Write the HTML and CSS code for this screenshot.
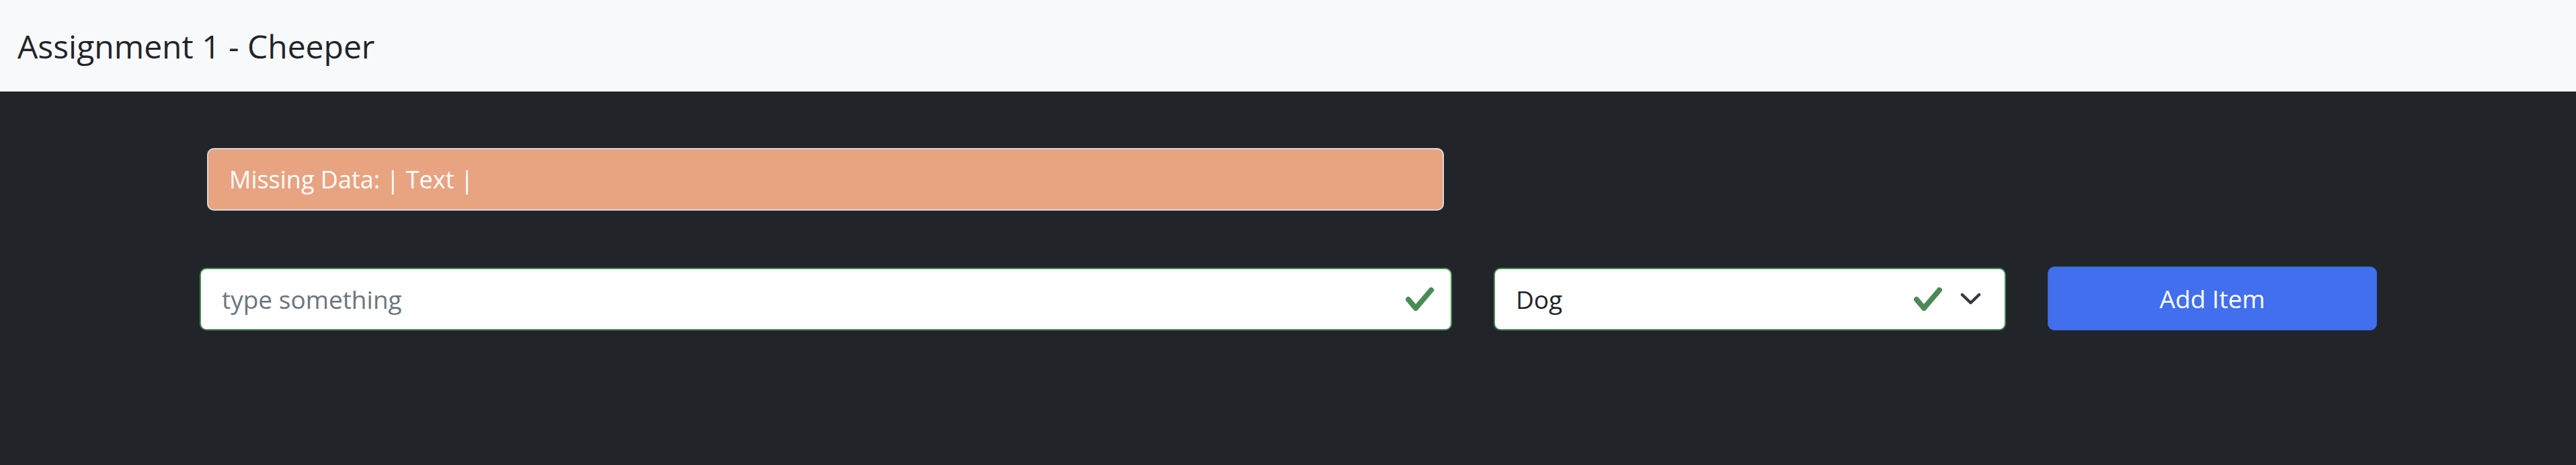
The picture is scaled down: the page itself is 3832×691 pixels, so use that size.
FILE: index.html
```html
<!DOCTYPE html>
<html lang="en">
<head>
<meta charset="utf-8">
<title>Assignment 1 - Cheeper</title>
<link rel="stylesheet" href="styles.css">
</head>
<body>
<nav class="navbar">
  <span class="brand">Assignment 1 - Cheeper</span>
</nav>
<main class="main">
  <div class="alert">Missing Data: | Text |</div>
  <form class="form-row">
    <div class="field field-text">
      <input class="field-input" type="text" placeholder="type something">
      <svg class="check" width="42" height="35" viewBox="0 0 42 35"><polyline points="4,18 15,31 38,4" fill="none" stroke="#4b8a56" stroke-width="8" stroke-linecap="round" stroke-linejoin="round"/></svg>
    </div>
    <div class="field field-select">
      <select class="field-input field-sel">
        <option>Dog</option>
        <option>Cat</option>
      </select>
      <svg class="check" width="42" height="35" viewBox="0 0 42 35"><polyline points="4,18 15,31 38,4" fill="none" stroke="#4b8a56" stroke-width="8" stroke-linecap="round" stroke-linejoin="round"/></svg>
      <svg class="chevron" width="31" height="19" viewBox="0 0 31 19"><polyline points="3,3 15.5,15 28,3" fill="none" stroke="#343a40" stroke-width="4.5" stroke-linecap="round" stroke-linejoin="round"/></svg>
    </div>
    <button class="btn" type="button">Add Item</button>
  </form>
</main>
</body>
</html>
```
FILE: styles.css
```css
html, body {
  margin: 0;
  padding: 0;
}
body {
  background: #212529;
  font-family: "Open Sans", "Noto Sans", sans-serif;
  color: #212529;
  height: 691px;
  overflow: hidden;
}
.navbar {
  height: 136px;
  background: #f8f9fa;
  display: flex;
  align-items: center;
  padding-left: 26px;
}
.brand {
  font-size: 48px;
  color: #212529;
}
.main {
  padding-top: 84px;
}
.alert {
  margin-left: 308px;
  width: 1840px;
  height: 93px;
  box-sizing: border-box;
  border: 2px solid #d6d8db;
  border-radius: 10px;
  background: #e8a381;
  color: #ffffff;
  font-size: 36px;
  display: flex;
  align-items: center;
  padding-left: 31px;
}
.form-row {
  margin: 85px 0 0 297px;
  display: flex;
  gap: 62px;
  height: 93px;
}
.field {
  box-sizing: border-box;
  height: 93px;
  background: #ffffff;
  border: 2px solid #4b8a56;
  border-radius: 10px;
  display: flex;
  align-items: center;
}
.field-text {
  width: 1863px;
  padding: 0 25px 0 31px;
}
.field-select {
  width: 762px;
  padding: 0 35px 0 31px;
}
.field-input {
  flex: 1;
  min-width: 0;
  border: none;
  outline: none;
  background: transparent;
  font-family: "Open Sans", "Noto Sans", sans-serif;
  font-size: 37px;
  color: #212529;
  padding: 0;
  margin: 0;
}
.field-input::placeholder {
  color: #6c757d;
}
.field-sel {
  appearance: none;
  -webkit-appearance: none;
}
.check {
  flex: none;
  display: block;
}
.chevron {
  flex: none;
  display: block;
  margin-left: 27px;
}
.btn {
  width: 490px;
  height: 95px;
  box-sizing: border-box;
  border: 1px solid #3a5fc8;
  border-radius: 10px;
  background: #416fee;
  color: #ffffff;
  font-family: "Open Sans", "Noto Sans", sans-serif;
  font-size: 37px;
  margin-top: -2px;
}
```
